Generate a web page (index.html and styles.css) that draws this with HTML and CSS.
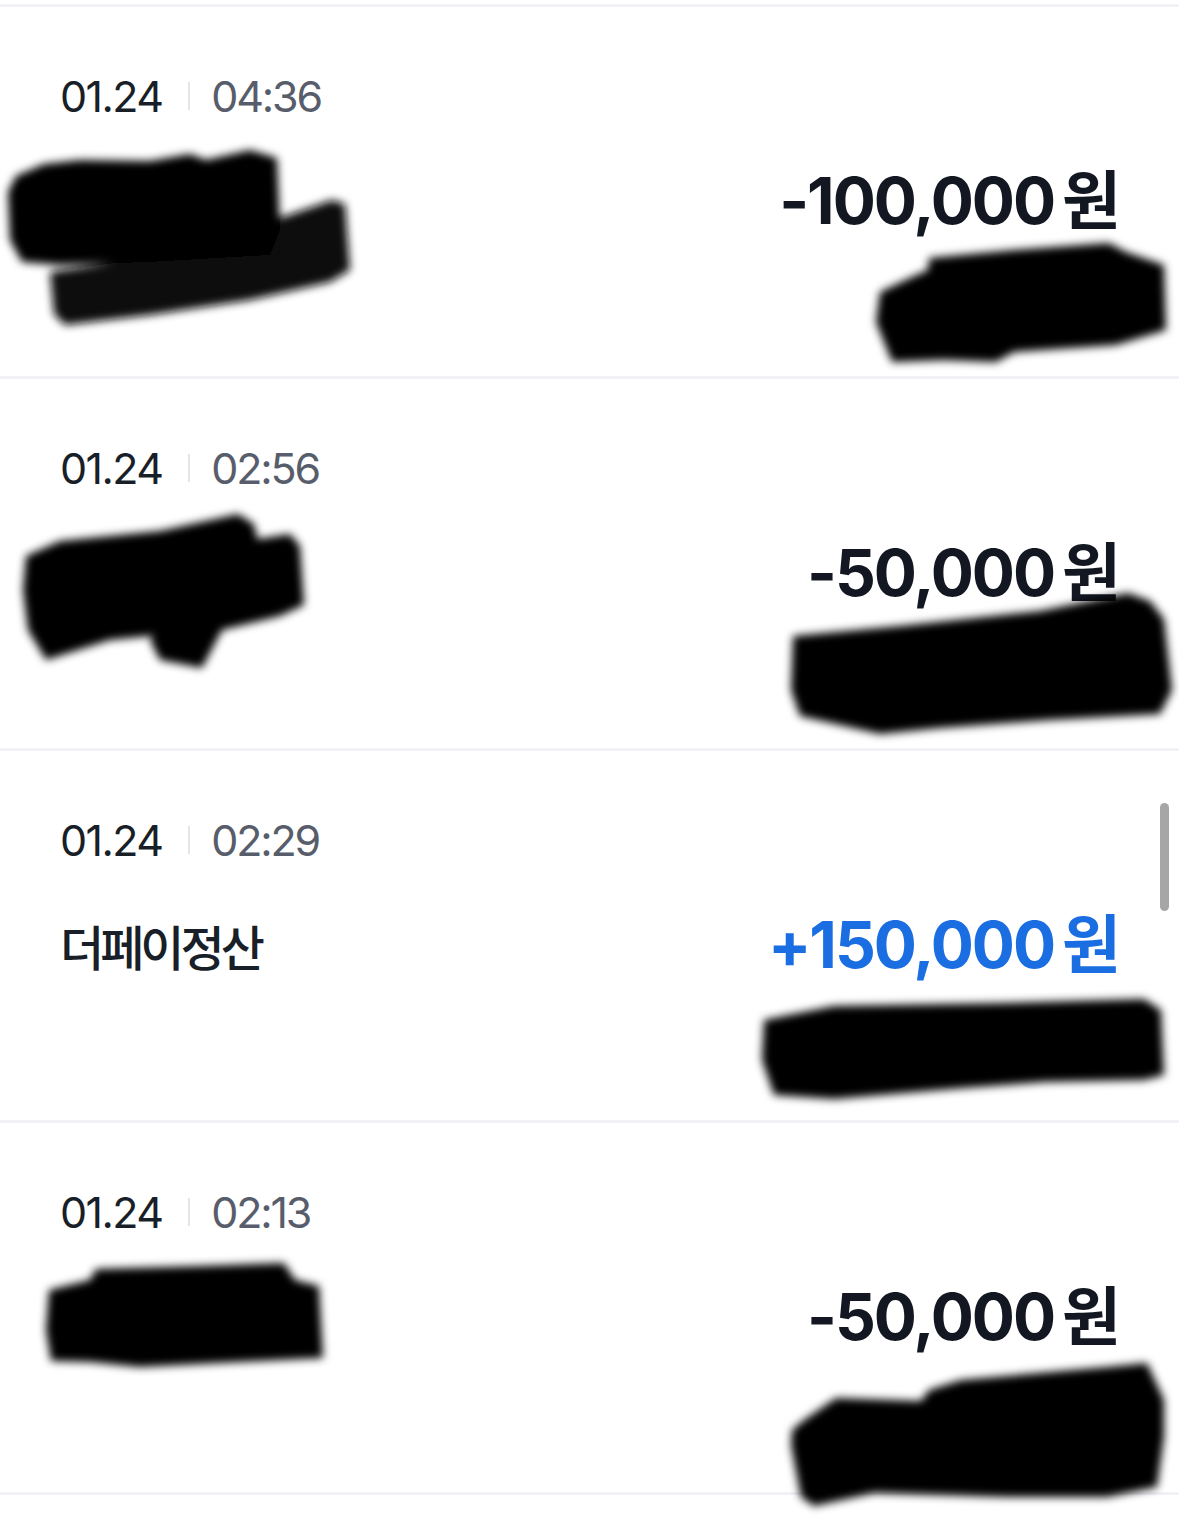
FILE: index.html
```html
<!DOCTYPE html>
<html lang="ko">
<head>
  <meta charset="UTF-8">
  <meta name="viewport" content="width=device-width, initial-scale=1.0">
  <title>거래내역</title>
  <link rel="stylesheet" href="styles.css">
</head>
<body>
  <svg class="defs" width="0" height="0">
    <filter id="smudge" x="-10%" y="-20%" width="120%" height="140%">
      <feGaussianBlur stdDeviation="4.5" />
    </filter>
  </svg>

  <div class="list">
    <!-- 01.24 04:36 -->
    <div class="row">
      <div class="when">
        <span class="date">01.24</span><span class="bar"></span><span class="time">04:36</span>
      </div>
      <div class="body">
        <svg class="mask m1l" width="360" height="190" viewBox="0 145 360 190">
          <g filter="url(#smudge)">
            <path class="soft" d="M50,272 L150,258 L260,232 L280,218 L332,200 L345,204 L350,270 L330,282 L250,300 L150,315 L65,325 L54,314 Z" />
            <path d="M8,192 L16,176 L44,164 L80,160 L150,161 L190,154 L206,160 L250,150 L277,158 L280,230 L270,255 L150,262 L60,265 L22,262 L10,240 Z" />
          </g>
        </svg>
        <div class="right">
          <div class="amount">-100,000<span class="won">원</span></div>
          <svg class="mask m1r" width="305" height="132" viewBox="865 238 305 132">
            <g filter="url(#smudge)">
              <path d="M925,258 L1010,250 L1105,243 L1122,252 L1160,265 L1162,330 L1112,345 L1010,352 L992,362 L940,360 L888,362 L872,322 L876,292 L910,276 L924,270 Z" />
            </g>
          </svg>
        </div>
      </div>
    </div>

    <!-- 01.24 02:56 -->
    <div class="row">
      <div class="when">
        <span class="date">01.24</span><span class="bar"></span><span class="time">02:56</span>
      </div>
      <div class="body">
        <svg class="mask m2l" width="300" height="172" viewBox="15 505 300 172">
          <g filter="url(#smudge)">
            <path d="M26,556 L60,541 L160,531 L238,514 L254,524 L262,560 L258,615 L210,630 L110,640 L46,660 L28,630 L23,590 Z" />
            <path d="M238,542 L290,534 L300,546 L304,605 L280,616 L222,630 L202,668 L160,660 L150,640 Z" />
          </g>
        </svg>
        <div class="right">
          <div class="amount">-50,000<span class="won">원</span></div>
          <svg class="mask m2r" width="396" height="155" viewBox="783 585 396 155">
            <g filter="url(#smudge)">
              <path d="M793,636 L900,626 L1040,611 L1128,593 L1150,601 L1164,619 L1172,690 L1160,714 L1050,720 L940,728 L880,734 L800,716 L791,690 Z" />
            </g>
          </svg>
        </div>
      </div>
    </div>

    <!-- 01.24 02:29 -->
    <div class="row">
      <div class="when">
        <span class="date">01.24</span><span class="bar"></span><span class="time">02:29</span>
      </div>
      <div class="body">
        <div class="label">더페이정산</div>
        <div class="right">
          <div class="amount plus">+150,000<span class="won">원</span></div>
          <svg class="mask m3r" width="418" height="118" viewBox="750 990 418 118">
            <g filter="url(#smudge)">
              <path d="M760,1020 L830,1006 L1000,1003 L1140,999 L1157,1010 L1160,1075 L1140,1080 L1040,1082 L960,1088 L830,1099 L770,1095 L758,1060 Z" />
            </g>
          </svg>
        </div>
      </div>
    </div>

    <!-- 01.24 02:13 -->
    <div class="row">
      <div class="when">
        <span class="date">01.24</span><span class="bar"></span><span class="time">02:13</span>
      </div>
      <div class="body">
        <svg class="mask m4l" width="292" height="118" viewBox="40 1256 292 118">
          <g filter="url(#smudge)">
            <path d="M49,1290 L90,1280 L96,1269 L200,1266 L284,1263 L295,1280 L319,1286 L323,1358 L200,1364 L140,1367 L90,1362 L51,1361 L46,1330 Z" />
          </g>
        </svg>
        <div class="right">
          <div class="amount">-50,000<span class="won">원</span></div>
          <svg class="mask m4r" width="388" height="160" viewBox="780 1355 388 160">
            <g filter="url(#smudge)">
              <path d="M788,1430 L800,1420 L832,1398 L917,1401 L925,1390 L957,1380 L1103,1367 L1143,1363 L1160,1400 L1160,1437 L1153,1487 L1103,1497 L1003,1497 L870,1493 L810,1506 L797,1497 L787,1445 Z" />
            </g>
          </svg>
        </div>
      </div>
    </div>
  </div>

  <div class="scrollbar"></div>
</body>
</html>
```

FILE: styles.css
```css
html { overflow: hidden; background: #fff; }
body {
  margin: 0;
  padding: 4px 0 22px;
  font-family: Inter, "Noto Sans CJK KR", sans-serif;
  color: #191f28;
}
.defs { position: absolute; }

.list { border-bottom: 3px solid #f1f1f6; }
.row {
  height: 372px;
  box-sizing: border-box;
  border-top: 3px solid #f1f1f6;
  padding: 63px 60px 0 60px;
}
.when {
  display: flex;
  align-items: center;
  height: 52px;
  font-size: 43px;
  line-height: 52px;
  letter-spacing: -1.6px;
}
.date { color: #191f28; }
.time { color: #575d6a; letter-spacing: -2.2px; }
.bar {
  width: 2px;
  height: 28px;
  background: #e3e5ea;
  margin: 0 21px 0 26px;
}

.body {
  display: flex;
  justify-content: space-between;
  align-items: flex-start;
  margin-top: 40px;
}
.label {
  font-family: "Noto Sans CJK KR", sans-serif;
  font-size: 48px;
  font-weight: 500;
  line-height: 78px;
  letter-spacing: -4px;
  color: #191f28;
}
.right {
  display: flex;
  flex-direction: column;
  align-items: flex-end;
}
.amount {
  font-size: 64px;
  line-height: 78px;
  font-weight: 700;
  color: #121722;
  letter-spacing: -2px;
}
.amount.plus { color: #1b6ee2; }
.won {
  font-family: "Noto Sans CJK KR", sans-serif;
  line-height: 1;
  margin-left: 8px;
}

.mask { display: block; overflow: visible; fill: #000; }
.mask .soft { fill: #111; }
.m1l { margin: -17px 0 0 -60px; }
.m2l { margin: -29px 0 0 -45px; }
.m4l { margin: -22px 0 0 -20px; }
.m1r { margin: -2px -55px 0 0; }
.m2r { margin: -27px -60px 0 0; }
.m3r { margin: 6px -53px 0 0; }
.m4r { margin: -1px -53px 0 0; }

.scrollbar {
  position: absolute;
  left: 1160px;
  top: 803px;
  width: 9px;
  height: 108px;
  border-radius: 5px;
  background: #a6a6a6;
}
```
